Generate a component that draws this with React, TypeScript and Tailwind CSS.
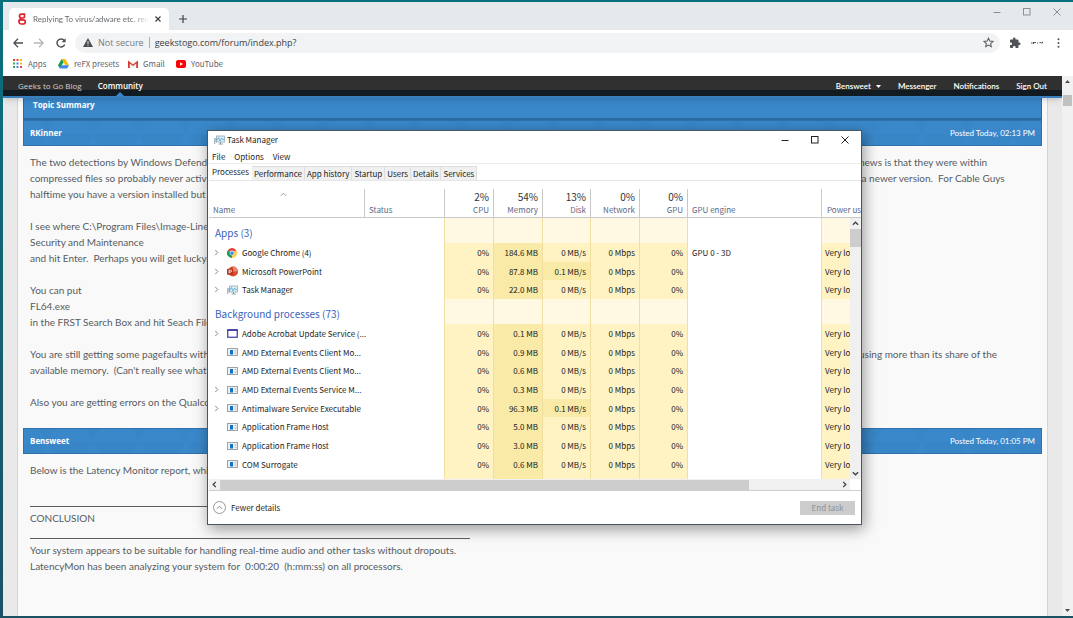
import React from "react";

const siteFont = "font-['Lato','Open_Sans',sans-serif]";
const uiFont = "font-['Noto_Sans_CJK_SC','Noto_Sans',sans-serif]";

function GeeksLogo() {
  return (
    <svg viewBox="0 0 10 12" className="h-3 w-[10px] shrink-0" fill="none" stroke="#e0202c" strokeWidth="1.7">
      <path d="M8.2 1.200H4.400a1.900 1.900 0 0 0 0 3.800h1.300a1.900 1.900 0 0 0 1.400-3.200" />
      <path d="M4 5.100 2.600 6.800h3.600a2.100 2.100 0 0 1 0 4.200H4.100a2.100 2.100 0 0 1-1.500-3.600" />
    </svg>
  );
}

function DriveIcon() {
  return (
    <svg viewBox="0 0 24 22" className="h-[10px] w-[11px]">
      <path d="M8 0h8l8 14h-8z" fill="#fbbc04" />
      <path d="M8 0l4 7-8 14-4-7z" fill="#0f9d58" />
      <path d="M8 14h16l-4 7H4z" fill="#4285f4" />
    </svg>
  );
}

function GmailIcon() {
  return (
    <svg viewBox="0 0 20 16" className="h-2 w-[10px]">
      <path d="M1 1h18v14H1z" fill="#f3f3f3" />
      <path d="M0 16V1l10 8 10-8v15h-3.5V7L10 12 3.500 7v9z" fill="#d5392d" />
    </svg>
  );
}

function YouTubeIcon() {
  return (
    <svg viewBox="0 0 20 16" className="h-2 w-[10px]">
      <rect width="20" height="16" rx="4" fill="#f00" />
      <path d="M8 4.500v7l6-3.500z" fill="#fff" />
    </svg>
  );
}

function AppsIcon() {
  const colors = ["#ea4335", "#ea4335", "#fbbc04", "#34a853", "#4285f4", "#fbbc04", "#34a853", "#4285f4", "#ea4335"];
  return (
    <svg viewBox="0 0 9 9" className="h-[9px] w-[9px]">
      {colors.map((c, i) => (
        <rect key={i} x={(i % 3) * 3.5} y={Math.floor(i / 3) * 3.5} width="2" height="2" fill={c} />
      ))}
    </svg>
  );
}

function TaskManagerIcon() {
  return (
    <svg viewBox="0 0 22 20" className="h-[10px] w-[11px]" fill="none">
      <rect x="5" y="2" width="16" height="12" fill="#d9eef7" stroke="#9aa8b4" strokeWidth="1.6" />
      <path d="M6 10l3-5 3 7 3-6 2 3h3" stroke="#4aa3cc" strokeWidth="1.5" />
      <path d="M1.500 6v12M4 6v8M9 18h9M13 14v4" stroke="#8796a3" strokeWidth="1.8" />
    </svg>
  );
}

function ChromeIcon() {
  return (
    <svg viewBox="0 0 24 24" className="h-[10px] w-[10px]">
      <path d="M12 12 1.600 6A12 12 0 0 1 22.400 6z" fill="#db4437" />
      <path d="M12 12V24A12 12 0 0 1 1.600 6z" fill="#0f9d58" />
      <path d="M12 12 22.400 6A12 12 0 0 1 12 24z" fill="#ffcd40" />
      <circle cx="12" cy="12" r="5.800" fill="#fff" />
      <circle cx="12" cy="12" r="4.500" fill="#4285f4" />
    </svg>
  );
}

function PowerPointIcon() {
  return (
    <svg viewBox="0 0 24 24" className="h-[11px] w-[11px]">
      <circle cx="13" cy="12" r="11" fill="#d6492a" />
      <path d="M13 1a11 11 0 0 1 11 11H13z" fill="#ed8468" />
      <rect x="0" y="6" width="13" height="13" rx="1.500" fill="#b7331b" />
      <path d="M4.500 16V9h3a2.200 2.200 0 0 1 0 4.500h-3" fill="none" stroke="#fff" strokeWidth="1.800" />
    </svg>
  );
}

function AdobeIcon() {
  return (
    <svg viewBox="0 0 11 9" className="h-[9px] w-[11px]">
      <rect x=".75" y=".75" width="9.500" height="7.500" fill="#fff" stroke="#3b3aa0" strokeWidth="1.200" />
      <path d="M.5 1.200h10" stroke="#3b3aa0" strokeWidth="1.400" />
    </svg>
  );
}

function ServiceIcon() {
  return (
    <svg viewBox="0 0 11 8" className="h-2 w-[11px]">
      <rect x=".5" y=".5" width="10" height="7" fill="#eef1f3" stroke="#9aa3aa" />
      <rect x="3" y="2" width="3" height="4.500" fill="#1273c4" />
      <path d="M7.500 2.500h2M7.500 4h2M7.500 5.500h2" stroke="#b4bcc2" strokeWidth=".7" />
    </svg>
  );
}

type IconKind = "chrome" | "ppt" | "tm" | "adobe" | "svc";
const icons: Record<IconKind, React.ReactElement> = {
  chrome: <ChromeIcon />,
  ppt: <PowerPointIcon />,
  tm: <TaskManagerIcon />,
  adobe: <AdobeIcon />,
  svc: <ServiceIcon />,
};

function Chevron({ dir, className }: { dir: "up" | "down" | "left" | "right"; className: string }) {
  const d = { up: "M1 5.500 4 2.500l3 3", down: "M1 2.500l3 3 3-3", left: "M5.500 1l-3 3 3 3", right: "M2.500 1l3 3-3 3" }[dir];
  return (
    <svg viewBox="0 0 8 8" className={className} fill="none" stroke="currentColor">
      <path d={d} />
    </svg>
  );
}

function WindowButtons({ className }: { className: string }) {
  return (
    <div className={className}>
      <button aria-label="Minimize">
        <svg viewBox="0 0 8 8" className="h-2 w-2" stroke="currentColor"><path d="M.5 4.500h7" /></svg>
      </button>
      <button aria-label="Maximize">
        <svg viewBox="0 0 8 8" className="h-2 w-2" fill="none" stroke="currentColor"><rect x=".5" y=".5" width="6.500" height="6.500" /></svg>
      </button>
      <button aria-label="Close">
        <svg viewBox="0 0 8 8" className="h-2 w-2" stroke="currentColor"><path d="M.5.5l7 7M7.500.5l-7 7" /></svg>
      </button>
    </div>
  );
}

function BrowserChrome() {
  return (
    <header className="shrink-0 font-['Open_Sans','Noto_Sans',sans-serif] text-[9px]">
      <div className="flex h-7 items-end bg-[#e6e9ec] pl-[6px]">
        <div className="flex h-[22px] w-40 items-center rounded-t-[5px] bg-white pl-2">
          <GeeksLogo />
          <span className={"ml-[6px] w-[116px] overflow-hidden whitespace-nowrap bg-linear-to-r from-[#5f6368] from-85% to-white bg-clip-text text-[8px] text-transparent " + siteFont}>
            Replying To virus/adware etc. rem
          </span>
          <button aria-label="Close tab" className="ml-[6px] text-[#3c4043]">
            <svg viewBox="0 0 6 6" className="h-[6px] w-[6px]" stroke="currentColor" strokeWidth="1.200"><path d="M.5.5l5 5M5.500.5l-5 5" /></svg>
          </button>
        </div>
        <button aria-label="New tab" className="mb-[7px] ml-[10px] text-[#3c4043]">
          <svg viewBox="0 0 8 8" className="h-2 w-2" stroke="currentColor" strokeWidth="1.200"><path d="M4 0v8M0 4h8" /></svg>
        </button>
        <WindowButtons className="mr-3 mb-[14px] ml-auto flex gap-[22px] text-[#8b8f94]" />
      </div>
      <div className="flex h-[25px] items-center bg-white pl-[10px] pr-[13px]">
        <button aria-label="Back" className="text-[#4a4d51]">
          <svg viewBox="0 0 10 10" className="h-[10px] w-[10px]" fill="none" stroke="currentColor" strokeWidth="1.300"><path d="M10 5H1M5 .8.800 5 5 9.200" /></svg>
        </button>
        <button aria-label="Forward" className="ml-[11px] text-[#b4b7ba]">
          <svg viewBox="0 0 10 10" className="h-[10px] w-[10px]" fill="none" stroke="currentColor" strokeWidth="1.300"><path d="M0 5h9M5 .8 9.200 5 5 9.200" /></svg>
        </button>
        <button aria-label="Reload" className="ml-3 text-[#4a4d51]">
          <svg viewBox="0 0 10 10" className="h-[10px] w-[10px]" fill="none" stroke="currentColor" strokeWidth="1.400"><path d="M8.700 6.500A4 4 0 1 1 8.200 2.500" /><path d="M9.600.3v4H5.600z" fill="currentColor" stroke="none" /></svg>
        </button>
        <div className="ml-[9px] flex h-5 flex-1 items-center rounded-full bg-[#f1f3f4] pr-[6px] pl-2">
          <svg viewBox="0 0 10 9" className="h-[9px] w-[10px]"><path d="M5 0l5 9H0z" fill="#4a4d51" /><path d="M5 3.200v2.600M5 6.600v1.100" stroke="#fff" strokeWidth="1" /></svg>
          <span className="ml-[5px] whitespace-nowrap text-[#777b80]">Not secure</span>
          <span className="mx-[5px] h-[11px] w-px bg-[#a9adb1]" />
          <input aria-label="Address" defaultValue="geekstogo.com/forum/index.php?" className="min-w-0 flex-1 bg-transparent text-[#3c4043] outline-none" />
          <svg viewBox="0 0 24 24" className="h-[11px] w-[11px]" fill="none" stroke="#5a5e63" strokeWidth="2.200"><path d="M12 2.500l2.900 6.400 7 .7-5.300 4.700 1.600 6.900-6.200-3.700-6.200 3.700 1.600-6.900L2.100 9.600l7-.7z" /></svg>
        </div>
        <button aria-label="Extensions" className="ml-[9px]">
          <svg viewBox="0 0 24 24" className="h-3 w-3" fill="#4f5358"><path d="M20.500 11H19V7c0-1.100-.9-2-2-2h-4V3.500a2.500 2.500 0 0 0-5 0V5H4c-1.100 0-2 .9-2 2v3.800h1.500a2.700 2.700 0 0 1 0 5.400H2V20c0 1.100.9 2 2 2h3.800v-1.500a2.700 2.700 0 0 1 5.400 0V22H17c1.100 0 2-.9 2-2v-4h1.500a2.500 2.500 0 0 0 0-5z" /></svg>
        </button>
        <svg viewBox="0 0 12 4" className="ml-[10px] h-1 w-3" stroke="#55595e" strokeWidth="1.200" fill="none"><path d="M0 2h1.500M2.500 1v2M3 1.500h2M6 2h1M8.500 1.500h1.500M10.500 2.500l1.500-1.500" /></svg>
        <button aria-label="Menu" className="ml-[14px]">
          <svg viewBox="0 0 3 10" className="h-[10px] w-[3px]" fill="#4f5358"><circle cx="1.500" cy="1.300" r="1" /><circle cx="1.500" cy="5" r="1" /><circle cx="1.500" cy="8.700" r="1" /></svg>
        </button>
      </div>
      <nav className={"flex h-[21px] items-center bg-white pb-1 pl-[10px] text-[8px] text-[#5f6368] " + uiFont}>
        <a href="#apps" className="flex w-[45px] items-center gap-[6px]"><AppsIcon />Apps</a>
        <a href="#refx" className="flex w-[70px] items-center gap-[5px]"><DriveIcon />reFX presets</a>
        <a href="#gmail" className="flex w-12 items-center gap-[5px]"><GmailIcon />Gmail</a>
        <a href="#youtube" className="flex items-center gap-[5px]"><YouTubeIcon />YouTube</a>
      </nav>
    </header>
  );
}

function PostBar({ name, date }: { name: string; date: string }) {
  return (
    <div className="flex h-[26px] items-center justify-between border border-[#2f71ac] bg-[#3a88ca] bg-[repeating-conic-gradient(from_30deg,#0000_0_60deg,#00305508_60deg_120deg)] bg-size-[46px_26px] px-[6px] text-white">
      <h2 className="font-['Open_Sans'] text-[8px] font-bold">{name}</h2>
      <span className="text-[8px]">{date}</span>
    </div>
  );
}

function Line({ left = "", right }: { left?: string; right?: string }) {
  return (
    <p className="flex min-h-4 whitespace-pre">
      <span className={right ? "w-[829px] shrink-0" : ""}>{left}</span>
      {right && <span>{right}</span>}
    </p>
  );
}

function Rule() {
  return (
    <div className="h-4 pt-3">
      <hr className="w-[440px] border-[#5a5f65]" />
    </div>
  );
}

function Forum() {
  return (
    <div className="flex min-h-0 flex-1">
      <main className={"flex min-w-0 flex-1 flex-col overflow-hidden bg-[#e9e9e9] " + siteFont}>
        <div className="relative z-10 shrink-0 border-b-2 border-[#3a7fbd] bg-linear-to-b from-[#303030] from-70% to-[#131b22] to-70% text-[8px] font-semibold shadow-md">
          <nav className="flex h-5 items-center pr-[15px] pl-[15px] text-white">
            <a href="#blog" className="font-['Open_Sans'] font-normal text-[#cfcfcf]">Geeks to Go Blog</a>
            <a href="#community" className="relative ml-4 font-['Open_Sans']">
              Community
              <svg viewBox="0 0 8 4" className="absolute -bottom-1 left-1/2 h-1 w-2 -translate-x-1/2"><path d="M4 0l4 4H0z" fill="#3a88ca" /></svg>
            </a>
            <div className="ml-auto flex gap-[17px]">
              <a href="#user" className="flex items-center gap-[5px]">
                Bensweet
                <svg viewBox="0 0 5 3" className="h-[3px] w-[5px]"><path d="M0 0h5L2.500 3z" fill="#fff" /></svg>
              </a>
              <a href="#messenger">Messenger</a>
              <a href="#notifications">Notifications</a>
              <a href="#signout">Sign Out</a>
            </div>
          </nav>
        </div>
        <div className="mr-[14px] ml-[14px] flex-1 border-x border-[#d4d4d4] bg-[#f9f9f9] px-[5px]">
          <h1 className="border-x border-b-2 border-[#2a6aa3] bg-[#3a88ca] pt-px pb-[7px] pl-[9px] font-['Open_Sans'] text-[8px] leading-3 font-bold text-white">Topic Summary</h1>
          <PostBar name="RKinner" date="Posted Today, 02:13 PM" />
          <div className="px-[7px] pt-2 pb-[18px] text-[10px] leading-4 text-[#565b61]">
            <Line left="The two detections by Windows Defende" right="news is that they were within" />
            <Line left="compressed files so probably never activ" right=" a newer version.  For Cable Guys" />
            <Line left="halftime you have a version installed but" />
            <Line />
            <Line left="I see where C:\Program Files\Image-Line\" />
            <Line left="Security and Maintenance" />
            <Line left="and hit Enter.  Perhaps you will get lucky." />
            <Line />
            <Line left="You can put" />
            <Line left="FL64.exe" />
            <Line left="in the FRST Search Box and hit Seach File" />
            <Line />
            <Line left="You are still getting some pagefaults with" right="using more than its share of the" />
            <Line left="available memory.  (Can't really see what" />
            <Line />
            <Line left="Also you are getting errors on the Qualco" />
          </div>
          <PostBar name="Bensweet" date="Posted Today, 01:05 PM" />
          <div className="px-[7px] pt-2 text-[10px] leading-4 text-[#565b61]">
            <Line left="Below is the Latency Monitor report, whic" />
            <Line />
            <Rule />
            <Line left="CONCLUSION" />
            <Rule />
            <Line left="Your system appears to be suitable for handling real-time audio and other tasks without dropouts." />
            <Line left="LatencyMon has been analyzing your system for  0:00:20  (h:mm:ss) on all processors." />
          </div>
        </div>
      </main>
      <div className="flex w-[11px] shrink-0 flex-col items-center bg-[#f1f1f1] pt-1 pb-1">
        <svg viewBox="0 0 5 3" className="h-[3px] w-[5px]"><path d="M0 3h5L2.500 0z" fill="#505050" /></svg>
        <div className="mt-3 h-[11px] w-[9px] bg-[#c1c1c1]" />
        <svg viewBox="0 0 5 3" className="mt-auto h-[3px] w-[5px]"><path d="M0 0h5L2.500 3z" fill="#505050" /></svg>
      </div>
    </div>
  );
}

type Proc = { name: string; icon: IconKind; open?: boolean; mem: string; disk?: string; engine?: string };

const groups: { title: string; rows: Proc[] }[] = [
  {
    title: "Apps (3)",
    rows: [
      { name: "Google Chrome (4)", icon: "chrome", open: true, mem: "184.6 MB", engine: "GPU 0 - 3D" },
      { name: "Microsoft PowerPoint", icon: "ppt", open: true, mem: "87.8 MB", disk: "0.1 MB/s" },
      { name: "Task Manager", icon: "tm", open: true, mem: "22.0 MB" },
    ],
  },
  {
    title: "Background processes (73)",
    rows: [
      { name: "Adobe Acrobat Update Service (...", icon: "adobe", open: true, mem: "0.1 MB" },
      { name: "AMD External Events Client Mo...", icon: "svc", mem: "0.9 MB" },
      { name: "AMD External Events Client Mo...", icon: "svc", mem: "0.6 MB" },
      { name: "AMD External Events Service M...", icon: "svc", open: true, mem: "0.3 MB" },
      { name: "Antimalware Service Executable", icon: "svc", open: true, mem: "96.3 MB", disk: "0.1 MB/s" },
      { name: "Application Frame Host", icon: "svc", mem: "5.0 MB" },
      { name: "Application Frame Host", icon: "svc", mem: "3.0 MB" },
      { name: "COM Surrogate", icon: "svc", mem: "0.6 MB" },
      { name: "", icon: "svc", mem: "" },
    ],
  },
];

const usage = [
  ["2%", "CPU"],
  ["54%", "Memory"],
  ["13%", "Disk"],
  ["0%", "Network"],
  ["0%", "GPU"],
];

const cell = "border-r border-[#f0dfa0] p-0 pr-1 text-right";

function ProcessTable() {
  return (
    <div className="relative h-[290px] overflow-hidden">
      <table className="w-full table-fixed border-separate border-spacing-0 text-[8px] leading-[11px] whitespace-nowrap text-[#1c1c1c]">
        <colgroup>
          <col className="w-[156px]" />
          <col className="w-20" />
          <col className="w-[49px]" />
          <col className="w-[49px]" />
          <col className="w-[48px]" />
          <col className="w-[49px]" />
          <col className="w-[48px]" />
          <col className="w-[134px]" />
          <col />
        </colgroup>
        <thead className="text-[#5b6783]">
          <tr className="h-[28px]">
            <th className="border-r border-b border-[#c9c9c9] p-0 pl-1 text-left align-bottom font-normal">
              <Chevron dir="up" className="ml-[67px] h-[7px] w-[7px] text-[#888]" />
              <div className="pt-[6px] pb-[2px]">Name</div>
            </th>
            <th className="border-r border-b border-[#c9c9c9] p-0 pb-[2px] pl-1 text-left align-bottom font-normal">Status</th>
            {usage.map(([pct, label]) => (
              <th key={label} className="border-r border-b border-[#c9c9c9] p-0 pr-1 pb-[2px] text-right align-bottom font-normal">
                <div className="text-[10px] leading-[15px] text-[#333]">{pct}</div>
                {label}
              </th>
            ))}
            <th className="border-r border-b border-[#c9c9c9] p-0 pb-[2px] pl-1 text-left align-bottom font-normal">GPU engine</th>
            <th className="overflow-hidden border-b border-[#c9c9c9] p-0 pb-[2px] pl-[5px] text-left align-bottom font-normal">Power usage</th>
          </tr>
        </thead>
        {groups.map((g) => (
          <tbody key={g.title}>
            <tr className="h-[25px]">
              <th colSpan={2} scope="rowgroup" className="border-r border-[#f0dfa0] p-0 pt-[3px] pl-[6px] text-left text-[10px] font-normal text-[#3a62b8]">{g.title}</th>
              {usage.map(([, label]) => (
                <td key={label} className="border-r border-[#f0dfa0] bg-[#fff8e3] p-0" />
              ))}
              <td className="border-r border-[#f0dfa0] p-0" />
              <td className="bg-[#fff8e3] p-0" />
            </tr>
            {g.rows.map((r, i) => (
              <tr key={i} className="h-[19px] nth-[3n]:h-[18px]">
                <td colSpan={2} className="border-r border-[#f0dfa0] p-0 pl-1">
                  <div className="flex items-center">
                    <span className="w-[14px] text-[#777]">{r.open && <Chevron dir="right" className="h-[7px] w-[7px]" />}</span>
                    <span className="flex w-[15px]">{icons[r.icon]}</span>
                    {r.name}
                  </div>
                </td>
                <td className={cell + " bg-[#fff3c4]"}>{r.mem && "0%"}</td>
                <td className={cell + " bg-[#f9eaa8]"}>{r.mem}</td>
                <td className={cell + (r.disk ? " bg-[#f9eaa8]" : " bg-[#fff3c4]")}>{r.mem && (r.disk ?? "0 MB/s")}</td>
                <td className={cell + " bg-[#fff3c4]"}>{r.mem && "0 Mbps"}</td>
                <td className={cell + " bg-[#fff3c4]"}>{r.mem && "0%"}</td>
                <td className="border-r border-[#f0dfa0] p-0 pl-1">{r.engine}</td>
                <td className="overflow-hidden bg-[#fff3c4] p-0 pl-[3px]">{r.mem && "Very low"}</td>
              </tr>
            ))}
          </tbody>
        ))}
      </table>
      <div className="absolute top-[29px] right-0 bottom-0 flex w-[11px] flex-col items-center bg-[#f0f0f0] py-[2px] text-[#404040]">
        <Chevron dir="up" className="h-[7px] w-[7px] stroke-[1.5]" />
        <div className="mt-[2px] h-[18px] w-[11px] bg-[#cdcdcd]" />
        <Chevron dir="down" className="mt-auto h-[7px] w-[7px] stroke-[1.5]" />
      </div>
    </div>
  );
}

function TaskManager() {
  const tabs = ["Performance", "App history", "Startup", "Users", "Details", "Services"];
  return (
    <section className={"absolute top-[130px] left-[207px] z-20 w-[655px] border border-[#4d5560] bg-white pl-px text-[8px] text-[#1c1c1c] shadow-[2px_4px_14px_rgba(0,0,0,0.4)] " + uiFont}>
      <div className="flex h-[18px] items-center pl-[5px]">
        <TaskManagerIcon />
        <h2 className="ml-[2px]">Task Manager</h2>
        <WindowButtons className="mr-3 ml-auto flex gap-[22px] text-[#222]" />
      </div>
      <div className="flex h-[15px] items-center gap-[9px] border-b border-[#ececec] pt-px pl-[3px]">
        <button>File</button>
        <button>Options</button>
        <button>View</button>
      </div>
      <div role="tablist" className="flex h-[17px] items-end border-b border-[#e6e6e6]">
        <button role="tab" aria-selected="true" className="flex h-4 w-[43px] items-center justify-center pb-px">Processes</button>
        {tabs.map((t) => (
          <button key={t} role="tab" aria-selected="false" className="h-[14px] border-t border-r border-[#dedede] bg-[#f0f0f0] px-[2px] leading-[13px]">{t}</button>
        ))}
      </div>
      <div className="h-2" />
      <ProcessTable />
      <div className="flex border-b border-[#cfcfcf]">
        <div className="mr-[11px] flex h-[11px] flex-1 items-center bg-[#f0f0f0] pr-[2px] pl-[2px] text-[#404040]">
          <Chevron dir="left" className="h-[7px] w-[7px] stroke-[1.5]" />
          <div className="ml-[2px] h-[10px] w-[83%] bg-[#cdcdcd]" />
          <Chevron dir="right" className="ml-auto h-[7px] w-[7px] stroke-[1.5]" />
        </div>
      </div>
      <div className="flex h-[33px] items-center justify-between pr-[6px] pl-1">
        <button className="flex items-center gap-[5px]">
          <span className="flex h-[13px] w-[13px] items-center justify-center rounded-full border border-[#999] text-[#777]">
            <Chevron dir="up" className="h-[7px] w-[7px]" />
          </span>
          Fewer details
        </button>
        <button disabled className="h-[14px] w-[55px] bg-[#cccccc] leading-[14px] text-[#8d91a0]">End task</button>
      </div>
    </section>
  );
}

export default function App() {
  return (
    <div className="relative flex h-screen flex-col overflow-hidden bg-linear-to-b from-[#08707f] to-[#1a5263] pt-[2px] pb-[2px] pl-[3px]">
      <BrowserChrome />
      <Forum />
      <TaskManager />
    </div>
  );
}
